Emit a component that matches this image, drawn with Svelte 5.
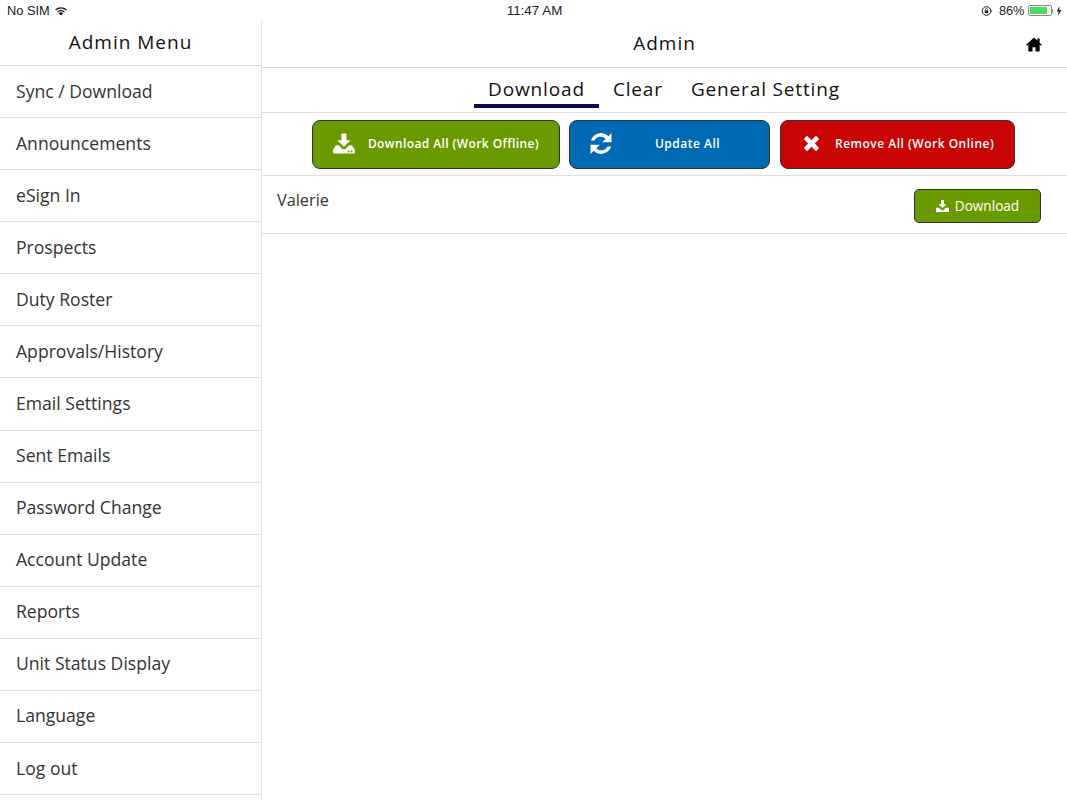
<script lang="ts">
  const menu = [
    'Sync / Download',
    'Announcements',
    'eSign In',
    'Prospects',
    'Duty Roster',
    'Approvals/History',
    'Email Settings',
    'Sent Emails',
    'Password Change',
    'Account Update',
    'Reports',
    'Unit Status Display',
    'Language',
    'Log out'
  ];
  const tabs = ['Download', 'Clear', 'General Setting'];
  let activeTab = $state('Download');
</script>

<div class="screen">
  <div class="status-bar">
    <div class="status-left">
      <span>No SIM</span>
      <svg class="wifi" viewBox="0 0 14 10" width="14" height="10">
        <path d="M7 9.6 4.9 7.4a3 3 0 0 1 4.2 0z" fill="#111" />
        <path d="M3.6 6.1a4.9 4.9 0 0 1 6.8 0" fill="none" stroke="#111" stroke-width="1.3" />
        <path d="M1.6 4a7.8 7.8 0 0 1 10.8 0" fill="none" stroke="#111" stroke-width="1.3" />
      </svg>
    </div>
    <div class="status-time">11:47 AM</div>
    <div class="status-right">
      <svg viewBox="0 0 12 12" width="12" height="12">
        <circle cx="5.5" cy="6" r="4.3" fill="none" stroke="#222" stroke-width="1" />
        <rect x="3.7" y="5.4" width="3.6" height="2.8" fill="#222" />
        <path d="M4.5 5.4V4.4a1 1 0 0 1 2 0v1" fill="none" stroke="#222" stroke-width=".7" />
        <path d="M10 5.2l1.6.8-1.6.8z" fill="#222" />
      </svg>
      <span class="pct">86%</span>
      <span class="battery"><span class="battery-level"></span></span>
      <span class="battery-nub"></span>
      <svg class="bolt" viewBox="0 0 6 10" width="6" height="10">
        <path d="M3.6 0 .6 5.6h2L2 10l3.4-6H3.2z" fill="#222" />
      </svg>
    </div>
  </div>

  <div class="body">
    <aside class="sidebar">
      <div class="sidebar-title">Admin Menu</div>
      {#each menu as item}
        <div class="menu-item">{item}</div>
      {/each}
    </aside>

    <main class="content">
      <header class="top">
        <span class="top-title">Admin</span>
        <svg class="home" viewBox="0 0 18 16" width="18" height="15">
          <path d="M9 .6 0.6 8.2l1 1.1L3 8.1V15.4h4.4v-4.6h3.2v4.6H15V8.1l1.4 1.2 1-1.1L15 6V1.6h-2.4v2.2z" fill="#000" />
        </svg>
      </header>

      <nav class="tabs">
        {#each tabs as tab}
          <button class="tab" class:active={activeTab === tab} onclick={() => (activeTab = tab)}>{tab}</button>
        {/each}
      </nav>

      <div class="actions">
        <button class="action green wide">
          <svg viewBox="0 0 26 24" width="25" height="23">
            <path d="M10 0h6v8h5l-8 8-8-8h5z" fill="#fff" />
            <path d="M3.5 14H7l4 4.500h4L19 14h3.500L26 19.500v3a1.500 1.500 0 0 1-1.500 1.500h-23A1.500 1.500 0 0 1 0 22.500v-3z" fill="#fff" />
            <circle cx="18.500" cy="21.500" r="1.100" fill="#6b9a00" />
            <circle cx="22" cy="21.500" r="1.100" fill="#6b9a00" />
          </svg>
          <span>Download All (Work Offline)</span>
        </button>
        <button class="action blue mid">
          <svg viewBox="3 3 18 18" width="22" height="21">
            <path d="M3.300 9.500A9 9 0 0 1 18.300 5.700L21 3v8h-8l3-3a6 6 0 0 0-9.600 1.500z" fill="#fff" />
            <path d="M20.700 14.500A9 9 0 0 1 5.700 18.300L3 21v-8h8l-3 3a6 6 0 0 0 9.600-1.500z" fill="#fff" />
          </svg>
          <span class="update-label">Update All</span>
        </button>
        <button class="action red narrow">
          <svg viewBox="0 0 20 20" width="17" height="17">
            <path d="M5.400 1.500 10 6.100l4.600-4.600a1 1 0 0 1 1.400 0l2.500 2.500a1 1 0 0 1 0 1.400L13.900 10l4.600 4.600a1 1 0 0 1 0 1.400L16 18.500a1 1 0 0 1-1.400 0L10 13.900l-4.600 4.600a1 1 0 0 1-1.400 0L1.500 16a1 1 0 0 1 0-1.400L6.100 10 1.500 5.400a1 1 0 0 1 0-1.400L4 1.500a1 1 0 0 1 1.400 0z" fill="#fff" />
          </svg>
          <span>Remove All (Work Online)</span>
        </button>
      </div>

      <div class="row">
        <span class="row-name">Valerie</span>
        <button class="download">
          <svg viewBox="0 0 14 13" width="13" height="12">
            <path d="M5.400 0h3.200v4.500h2.600L7 8.800 2.800 4.500h2.600z" fill="#fff" />
            <path d="M0 8.500h3.400L6 11h2l2.600-2.500H14V13H0z" fill="#fff" />
          </svg>
          <span>Download</span>
        </button>
      </div>
    </main>
  </div>
</div>

<style>
  :global(body) {
    margin: 0;
    background: #fff;
  }

  .screen {
    width: 1067px;
    height: 800px;
    overflow: hidden;
    font-family: 'Open Sans', sans-serif;
    color: #222;
    background: #fff;
  }

  .status-bar {
    height: 21px;
    display: grid;
    grid-template-columns: 1fr auto 1fr;
    align-items: center;
    padding: 0 5px 0 7px;
    font-family: 'Liberation Sans', sans-serif;
    font-size: 12.800px;
    color: #222;
  }

  .status-left {
    display: flex;
    align-items: center;
    gap: 4px;
  }

  .status-time {
    font-size: 13.400px;
  }

  .status-right {
    display: flex;
    align-items: center;
    justify-content: flex-end;
  }

  .pct {
    margin: 0 3px 0 6px;
  }

  .battery {
    width: 24px;
    height: 11px;
    border: 1px solid #8a8a8a;
    border-radius: 2px;
    padding: 1px;
    box-sizing: border-box;
    display: flex;
  }

  .battery-level {
    width: 86%;
    background: #4cd964;
  }

  .battery-nub {
    width: 1.500px;
    height: 4px;
    background: #8a8a8a;
    margin-right: 3px;
  }

  .body {
    display: flex;
    height: 779px;
  }

  .sidebar {
    width: 262px;
    flex-shrink: 0;
    box-sizing: border-box;
    border-right: 1px solid #e2e2e2;
  }

  .sidebar-title {
    height: 45px;
    box-sizing: border-box;
    border-bottom: 1px solid #ddd;
    padding-bottom: 2px;
    display: flex;
    align-items: center;
    justify-content: center;
    font-size: 19px;
    letter-spacing: 1px;
    color: #111;
  }

  .menu-item {
    height: 52.080px;
    box-sizing: border-box;
    border-bottom: 1px solid #ddd;
    padding: 0 0 2px 16px;
    display: flex;
    align-items: center;
    font-size: 17.600px;
    color: #333;
  }

  .content {
    flex: 1;
    min-width: 0;
  }

  .top {
    position: relative;
    height: 47px;
    box-sizing: border-box;
    border-bottom: 1px solid #ddd;
    padding-bottom: 2px;
    display: flex;
    align-items: center;
    justify-content: center;
    font-size: 19px;
    letter-spacing: 1px;
    color: #111;
  }

  .home {
    position: absolute;
    right: 24px;
    top: 16px;
  }

  .tabs {
    height: 45px;
    box-sizing: border-box;
    border-bottom: 1px solid #ddd;
    padding-right: 1px;
    display: flex;
    justify-content: center;
  }

  .tab {
    background: none;
    border: none;
    border-bottom: 4px solid transparent;
    height: 40px;
    padding: 6px 14px 0;
    font-family: inherit;
    font-size: 19px;
    letter-spacing: 0.85px;
    color: #111;
  }

  .tab.active {
    border-bottom-color: #0a0a55;
  }

  .actions {
    height: 63px;
    box-sizing: border-box;
    border-bottom: 1px solid #ddd;
    padding-right: 2px;
    display: flex;
    justify-content: center;
    align-items: center;
    gap: 9px;
  }

  .action {
    height: 49px;
    box-sizing: border-box;
    border: 1px solid #333;
    border-radius: 8px;
    display: flex;
    align-items: center;
    color: #fff;
    font-family: inherit;
    font-size: 12px;
    font-weight: 600;
    letter-spacing: 0.5px;
    white-space: nowrap;
    padding: 0 20px 1px;
  }

  .green {
    background: #6b9a00;
  }

  .blue {
    background: #0069b4;
  }

  .red {
    background: #c90404;
  }

  .wide {
    width: 248px;
    gap: 13px;
    letter-spacing: 0.4px;
  }

  .mid {
    width: 201px;
  }

  .narrow {
    width: 235px;
    padding: 0 0 1px 22px;
    gap: 15px;
    margin-left: 1px;
  }

  .update-label {
    flex: 1;
    text-align: center;
    padding-left: 14px;
  }

  .row {
    height: 58px;
    box-sizing: border-box;
    border-bottom: 1px solid #ddd;
    display: flex;
    justify-content: space-between;
    padding: 13px 26px 0 15px;
  }

  .row-name {
    font-size: 16.300px;
    color: #333;
  }

  .download {
    width: 127px;
    height: 34px;
    box-sizing: border-box;
    background: #6b9a00;
    border: 1px solid #333;
    border-radius: 5px;
    padding: 0 0 1px;
    display: flex;
    align-items: center;
    justify-content: center;
    gap: 6px;
    color: #fff;
    font-family: inherit;
    font-size: 13.600px;
  }
</style>
